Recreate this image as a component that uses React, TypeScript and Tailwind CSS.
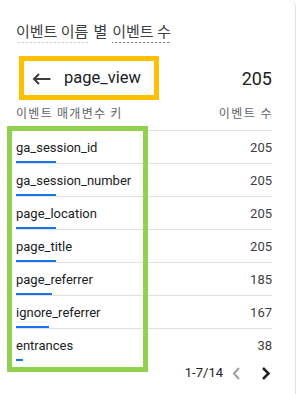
import React from "react";

const rows = [
    {key: "ga_session_id", count: 205},
    {key: "ga_session_number", count: 205},
    {key: "page_location", count: 205},
    {key: "page_title", count: 205},
    {key: "page_referrer", count: 185},
    {key: "ignore_referrer", count: 167},
    {key: "entrances", count: 38},
];

const max = 205;

export default function App() {
    return (
        <div
            className="relative h-[394px] w-[296px] overflow-hidden rounded-tr-lg border-r border-[#e0e0e0] bg-white font-['Roboto','Noto_Sans_CJK_KR',sans-serif] text-[#3c4043]">
            <div className="w-[272px] pl-4">
                {/* title */}
                <div className="h-[56px] pt-[21px]">
                    <div className="flex text-[15px] leading-[20px] font-['Noto_Sans_CJK_KR','Roboto',sans-serif]">
                        <span
                            className="bg-[linear-gradient(to_right,#c8c8c8_50%,transparent_50%)] bg-[length:4px_1px] bg-bottom bg-repeat-x pb-[2px]">이벤트 이름</span>
                        <span className="px-[5px]">별</span>
                        <span
                            className="bg-[linear-gradient(to_right,#70757a_50%,transparent_50%)] bg-[length:4px_1px] bg-bottom bg-repeat-x pb-[2px]">이벤트 수</span>
                    </div>
                </div>

                {/* selected event */}
                <div className="flex h-[44px] items-center justify-between">
                    <div className="flex items-center">
                        <svg width="19" height="12" viewBox="0 0 19 12" className="ml-[16px] mt-[2px]" fill="none"
                             stroke="#3c4043" strokeWidth="2">
                            <path d="M18.5 6H2M7 1L2 6l5 5"/>
                        </svg>
                        <span className="ml-[13px] text-[16.5px] leading-[22px] text-[#202124]">page_view</span>
                    </div>
                    <span className="text-[18px] text-[#202124]">205</span>
                </div>

                {/* header */}
                <div
                    className="flex h-[30px] items-center justify-between pb-[4px] text-[12px] tracking-[1.3px] text-[#5f6368] font-['Noto_Sans_CJK_KR','Roboto',sans-serif]">
                    <span>이벤트 매개변수 키</span>
                    <span className="tracking-[1.5px] -mr-[1px]">이벤트 수</span>
                </div>

                {/* rows */}
                <div className="border-t border-[#e0e0e0]">
                    {rows.map((r, i) => (
                        <div key={r.key}
                             className={i < rows.length - 1 ? "flex justify-between border-b border-[#e0e0e0]" : "flex justify-between"}>
                            <div className="flex flex-col pt-[8px]">
                                <span className="text-[13px] leading-[18px] text-[#202124]">{r.key}</span>
                                <div className="mt-[4px] h-[2px] bg-[#1a73e8]"
                                     style={{width: Math.round((r.count / max) * 40)}}/>
                            </div>
                            <span className="pt-[8px] text-[13px] leading-[18px] text-[#3c4043]">{r.count}</span>
                        </div>
                    ))}
                </div>

                {/* pagination */}
                <div className="flex h-[24px] items-center justify-end">
                    <span className="text-[13px] text-[#202124]">1-7/14</span>
                    <svg width="9" height="13" viewBox="0 0 9 13" className="ml-[9px]" fill="none" stroke="#9aa0a6"
                         strokeWidth="2">
                        <path d="M7 1L2 6.5 7 12"/>
                    </svg>
                    <svg width="10" height="13" viewBox="0 0 10 13" className="ml-[20px] mr-[1px]" fill="none"
                         stroke="#202124" strokeWidth="2.5">
                        <path d="M2 1l5.5 5.5L2 12"/>
                    </svg>
                </div>
            </div>

            {/* annotation boxes */}
            <div className="absolute left-[19px] top-[56px] h-[44px] w-[140px] border-[5px] border-[#ffc000]"/>
            <div className="absolute left-[7px] top-[126px] h-[246px] w-[141px] border-[5px] border-[#92d050]"/>
        </div>
    );
}
